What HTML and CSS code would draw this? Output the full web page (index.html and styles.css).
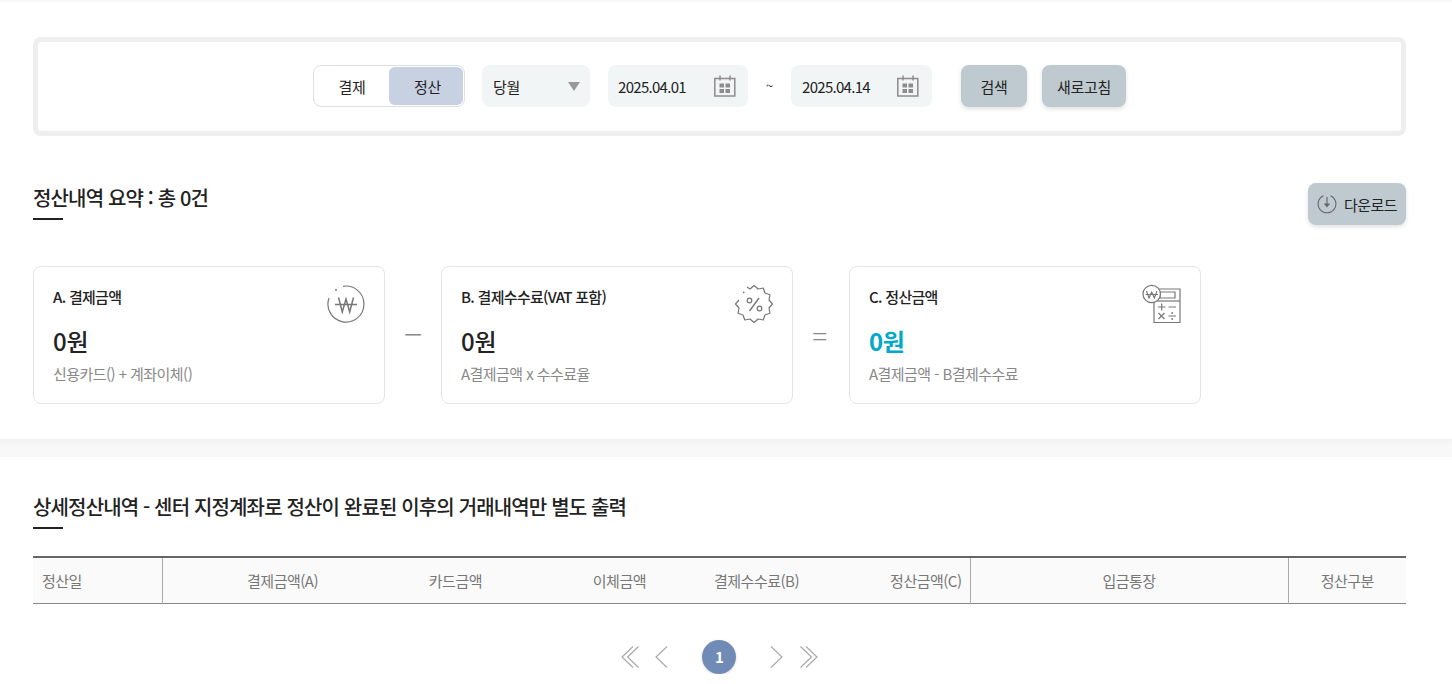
FILE: index.html
```html
<!DOCTYPE html>
<html lang="ko">
<head>
  <meta charset="UTF-8">
  <meta name="viewport" content="width=device-width, initial-scale=1">
  <title>정산내역</title>
  <link rel="stylesheet" href="styles.css">
</head>
<body>
  <section class="top">
    <!-- 검색 조건 -->
    <form class="search-box">
      <div class="toggle">
        <button type="button" class="toggle-item">결제</button>
        <button type="button" class="toggle-item on">정산</button>
      </div>
      <div class="select">
        <span>당월</span>
        <i class="select-arrow"></i>
      </div>
      <div class="date">
        <span>2025.04.01</span>
        <svg class="cal" width="22" height="22" viewBox="0 0 22 22" fill="none" stroke="#8c8c8c" stroke-width="1.5">
          <rect x="0.8" y="3.5" width="20" height="17.5"/>
          <path d="M6 0.5v5M16 0.5v5"/>
          <path d="M5.500 8.500h4.500v4h-4.500zM11.500 8.500h4.500v4h-4.500zM5.500 14h4.500v4h-4.500zM11.500 14h4.500v4h-4.500z" fill="#8c8c8c" stroke="none"/>
        </svg>
      </div>
      <span class="tilde">~</span>
      <div class="date date-to">
        <span>2025.04.14</span>
        <svg class="cal" width="22" height="22" viewBox="0 0 22 22" fill="none" stroke="#8c8c8c" stroke-width="1.5">
          <rect x="0.8" y="3.5" width="20" height="17.5"/>
          <path d="M6 0.5v5M16 0.5v5"/>
          <path d="M5.500 8.500h4.500v4h-4.500zM11.500 8.500h4.500v4h-4.500zM5.500 14h4.500v4h-4.500zM11.500 14h4.500v4h-4.500z" fill="#8c8c8c" stroke="none"/>
        </svg>
      </div>
      <button type="button" class="btn btn-search">검색</button>
      <button type="button" class="btn btn-refresh">새로고침</button>
    </form>

    <!-- 요약 -->
    <div class="summary-head">
      <h2 class="title">정산내역 요약 : 총 0건</h2>
      <button type="button" class="btn btn-down">
        <svg width="20" height="20" viewBox="0 0 20 20" fill="none" stroke="#666" stroke-width="1.1">
          <path d="M6.500 1.700A8.900 8.900 0 1 0 13.500 1.700"/>
          <path d="M10 3v9"/>
          <path d="M6.800 9.500h6.400L10 13.400z" fill="#666" stroke="none"/>
        </svg>
        다운로드
      </button>
    </div>

    <div class="cards">
      <div class="card">
        <h3>A. 결제금액</h3>
        <strong class="amount">0원</strong>
        <p>신용카드() + 계좌이체()</p>
        <svg class="card-icon" width="40" height="40" viewBox="0 0 40 40" fill="none" stroke="#777" stroke-width="1.2">
          <path d="M17 2.300A18 18 0 1 1 3 14"/>
          <circle cx="10" cy="6" r="1" fill="#777" stroke="none"/>
          <path d="M12.500 13.500l3.800 14.500 3.700-13 3.700 13 3.800-14.500M9 20.500h22" stroke-width="1.500"/>
        </svg>
      </div>
      <span class="op minus">&minus;</span>
      <div class="card">
        <h3>B. 결제수수료(VAT 포함)</h3>
        <strong class="amount">0원</strong>
        <p>A결제금액 x 수수료율</p>
        <svg class="card-icon" width="40" height="40" viewBox="0 0 40 40" fill="none" stroke="#777" stroke-width="1.2" stroke-linejoin="round">
          <path d="M13 3L16 5L20 1.500L24 5L29.250 4L31 9L36 10.750L35 16L38.500 20L35 24L36 29.250L31 31L29.250 36L24 35L20 38.500L16 35L10.750 36L9 31L4 29.250L5 24L1.500 20L5 16"/>
          <circle cx="9.700" cy="8.300" r="0.9" fill="#777" stroke="none"/>
          <path d="M15.500 27L25 14" stroke-width="1.400"/>
          <circle cx="15.500" cy="16.500" r="2.300"/>
          <circle cx="25.500" cy="24.500" r="2.300"/>
        </svg>
      </div>
      <span class="op">=</span>
      <div class="card">
        <h3>C. 정산금액</h3>
        <strong class="amount point">0원</strong>
        <p>A결제금액 - B결제수수료</p>
        <svg class="card-icon" width="40" height="40" viewBox="0 0 40 40" fill="none" stroke="#777" stroke-width="1.2">
          <path d="M12 19v19.500h26V5H16"/>
          <path d="M18 8h15v6H18z"/>
          <path d="M12 17h26"/>
          <circle cx="9.700" cy="10" r="8.700" fill="#fff"/>
          <path d="M4.500 7l2.500 7 2.700-6 2.700 6 2.500-7M3.500 10.500h12.500" stroke-width="1.100"/>
          <path d="M16 23h7.500M19.700 19.500v7M26.500 23h7.500M16.500 29l6 6M22.500 29l-6 6M26.500 32h7.500"/>
          <circle cx="30.200" cy="29" r="0.900" fill="#777" stroke="none"/>
          <circle cx="30.200" cy="35" r="0.900" fill="#777" stroke="none"/>
        </svg>
      </div>
    </div>
  </section>

  <div class="band"></div>

  <!-- 상세내역 -->
  <section class="detail">
    <h2 class="title">상세정산내역 - 센터 지정계좌로 정산이 완료된 이후의 거래내역만 별도 출력</h2>
    <table class="grid">
      <colgroup>
        <col class="c1"><col class="c2"><col class="c2"><col class="c2"><col class="c3"><col class="c4"><col class="c5"><col class="c6">
      </colgroup>
      <thead>
        <tr>
          <th class="left line">정산일</th>
          <th class="right">결제금액(A)</th>
          <th class="right">카드금액</th>
          <th class="right">이체금액</th>
          <th class="right">결제수수료(B)</th>
          <th class="right line">정산금액(C)</th>
          <th class="line">입금통장</th>
          <th>정산구분</th>
        </tr>
      </thead>
    </table>

    <div class="paging">
      <svg width="20" height="24" viewBox="0 0 20 24" fill="none" stroke="#aaa" stroke-width="1.2"><path d="M13 1.500L2 12l11 10.500M18.500 1.500L7.500 12l11 10.500"/></svg>
      <svg class="prev" width="14" height="24" viewBox="0 0 14 24" fill="none" stroke="#aaa" stroke-width="1.2"><path d="M13 1.500L2 12l11 10.500"/></svg>
      <a class="page on">1</a>
      <svg class="next" width="14" height="24" viewBox="0 0 14 24" fill="none" stroke="#aaa" stroke-width="1.2"><path d="M1 1.500L12 12 1 22.500"/></svg>
      <svg width="20" height="24" viewBox="0 0 20 24" fill="none" stroke="#aaa" stroke-width="1.2"><path d="M0.500 1.500L11.500 12l-11 10.500M6 1.500L17 12 6 22.500"/></svg>
    </div>
  </section>
</body>
</html>
```

FILE: styles.css
```css
* { box-sizing: border-box; }
html, body { margin: 0; padding: 0; }
body { font-family: "Noto Sans CJK KR", "Noto Sans", sans-serif; font-size: 15px; color: #222; background: #fff; letter-spacing: -0.3px; overflow: hidden; }
button { font: inherit; letter-spacing: inherit; color: inherit; border: none; cursor: pointer; }
h2, h3, p { margin: 0; }

.top { padding: 35px 46px 0 33px; border-top: 2px solid #f7f7f7; }

/* search */
.search-box { display: flex; align-items: center; justify-content: center; height: 99px; padding-bottom: 2px; border: 5px solid #eeeeee; border-radius: 8px; }
.toggle { display: flex; width: 152px; height: 42px; padding: 1px; border: 1px solid #dcdfe3; border-radius: 8px; margin-right: 17px; }
.toggle-item { flex: 1; background: none; border-radius: 6px; padding: 2px 0 0 0; }
.toggle-item.on { flex: 0 0 74px; background: #c8d1e2; padding: 2px 0 0 3px; }
.select { display: flex; align-items: center; justify-content: space-between; width: 108px; height: 42px; padding: 2px 10px 0 11px; margin-right: 18px; background: #f2f5f6; border-radius: 8px; }
.select-arrow { width: 0; height: 0; border-style: solid; border-width: 9px 6px 0; border-color: #999 transparent transparent; }
.date { display: flex; align-items: center; justify-content: space-between; width: 140px; height: 42px; padding: 0 12px 0 10px; background: #f2f5f6; border-radius: 8px; letter-spacing: -0.7px; }
.date span { padding-top: 2px; }
.date-to { width: 141px; padding: 0 13px 0 11px; }
.tilde { width: 43px; text-align: center; font-size: 13px; color: #333; }
.btn { height: 42px; padding: 2px 0 0; background: #bfcad0; border-radius: 8px; box-shadow: 0 2px 4px rgba(0,0,0,0.12); }
.btn-search { width: 66px; margin-left: 29px; }
.btn-refresh { width: 84px; margin-left: 15px; }

/* summary */
.summary-head { display: flex; justify-content: space-between; margin-top: 47px; height: 83px; }
.title { position: relative; height: 37px; font-size: 20px; font-weight: 500; line-height: 30px; letter-spacing: -0.85px; color: #222; }
.title::after { content: ""; position: absolute; left: 0; bottom: 0; width: 30px; height: 2px; background: #222; }
.btn-down { display: flex; align-items: center; justify-content: center; gap: 7px; width: 98px; padding: 0; letter-spacing: -0.5px; }

.cards { display: flex; align-items: center; }
.card { position: relative; width: 352px; height: 138px; padding: 20px 19px; border: 1px solid #e2e4e6; border-radius: 8px; }
.card h3 { font-size: 15px; font-weight: 500; line-height: 20px; letter-spacing: -0.7px; }
.amount { display: block; margin-top: 17px; font-size: 24px; font-weight: 500; line-height: 34px; }
.amount.point { color: #00a9c9; font-weight: 700; }
.card p { margin-top: 5px; color: #888; line-height: 22px; letter-spacing: -0.55px; }
.card-icon { position: absolute; right: 18px; top: 17px; }
.op { width: 56px; padding-right: 3px; text-align: center; font-size: 28px; font-weight: 300; line-height: 1; color: #888; }
.op.minus { padding-right: 0; font-size: 34px; margin-top: -4px; }

.band { height: 18px; margin-top: 35px; background: linear-gradient(#f2f2f2, #f8f8f8 40%); }

/* detail */
.detail { padding: 35px 46px 0 33px; }
.grid { width: 100%; margin-top: 27px; border-collapse: collapse; table-layout: fixed; background: #fafafa; border-top: 2px solid #666; border-bottom: 1px solid #888; }
.c1 { width: 129px; }
.c2 { width: 164px; }
.c3 { width: 153px; }
.c4 { width: 163px; }
.c5 { width: 318px; }
.grid th { height: 46px; padding: 0 8px; font-weight: 400; color: #777; text-align: center; letter-spacing: -0.5px; }
.grid th.left { text-align: left; padding-left: 9px; }
.grid th.right { text-align: right; }
.grid th.line { border-right: 1px solid #aaa; }

.paging { display: flex; align-items: center; justify-content: center; margin-top: 36px; padding-left: 1px; }
.page { display: flex; align-items: center; justify-content: center; width: 34px; height: 34px; padding-left: 1px; border-radius: 50%; font-weight: 700; letter-spacing: 0; color: #fff; }
.page.on { background: #708bb5; box-shadow: 0 1px 3px rgba(0,0,0,0.15); }
.prev { margin: 0 34px 0 14px; }
.next { margin: 0 16px 0 34px; }
```
